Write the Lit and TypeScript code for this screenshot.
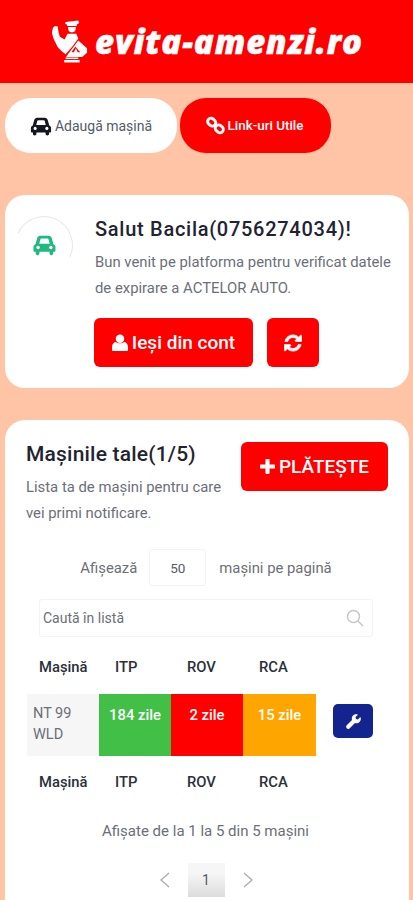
import { LitElement, html, css, svg } from "lit";
import { customElement } from "lit/decorators.js";

const carPath = "M3 15.5 L4.6 9.6 C5 8 6.2 7 8 7 H16 C17.8 7 19 8 19.4 9.6 L21 15.5 C22.3 16 23 17 23 18.2 V22 C23 22.6 22.6 23 22 23 H20.8 V24.5 C20.8 25.6 20 26.4 18.9 26.4 C17.8 26.4 17 25.6 17 24.5 V23 H7 V24.5 C7 25.6 6.2 26.4 5.1 26.4 C4 26.4 3.2 25.6 3.2 24.5 V23 H2 C1.4 23 1 22.6 1 22 V18.2 C1 17 1.7 16 3 15.5 Z M6.8 15 H17.2 L16.2 10.8 C16 10 15.6 9.6 14.8 9.6 H9.2 C8.4 9.6 8 10 7.8 10.8 Z";
const Car = (cls: string) => html`<svg class=${cls} viewBox="0 4 24 24" aria-hidden="true"><path fill-rule="evenodd" d=${carPath}></path><circle cx="5.6" cy="18.6" r="1.7" fill="var(--hole)"></circle><circle cx="18.4" cy="18.6" r="1.7" fill="var(--hole)"></circle></svg>`;

@customElement("app-root")
export class AppRoot extends LitElement {
  static styles = css`
    :host { display: block; height: 900px; overflow: hidden; background: #ffc4a6; font-family: Roboto, sans-serif; color: #6b7280; }
    * { box-sizing: border-box; }
    .top { height: 83px; background: #ff0000; display: flex; align-items: center; justify-content: center; gap: 6px; padding-bottom: 1px; }
    .logo-ic { width: 39px; height: 49px; fill: #fff; flex: none; }
    .brand { font-family: "Open Sans", sans-serif; font-weight: 800; font-style: italic; font-size: 33px; line-height: 1; color: #fff; letter-spacing: 0.85px; -webkit-text-stroke: 0.5px #fff; margin-top: 1px; }
    .tabs { display: flex; gap: 3px; padding: 15px 5px 0; }
    .tab { height: 55px; border-radius: 26px; display: flex; align-items: center; justify-content: center; gap: 3px; font-size: 14px; }
    .tab-light { width: 172px; background: #fff; color: #555b66; --hole: #fff; }
    .tab-red { width: 151px; background: #f00; color: #fff; font-weight: 500; font-size: 13.4px; padding-right: 2px; }
    .tab-car { width: 22px; height: 22px; fill: #14171f; }
    .tab-link { width: 19px; height: 19px; stroke: #fff; fill: none; stroke-width: 3; }
    .card { background: #fff; border-radius: 20px; margin: 0 4px 0 5px; }
    .hello { margin-top: 42px; height: 193px; padding: 23px 21px 0 10px; display: flex; gap: 22px; }
    .avatar { width: 58px; height: 58px; border-radius: 50%; flex: none; margin-top: -2px; border: 1px solid transparent; border-top-color: #e7e7e7; border-right-color: #e7e7e7; display: flex; align-items: center; justify-content: center; transform: rotate(-20deg); }
    .avatar svg { width: 25px; height: 24px; fill: #22b981; --hole: #fff; transform: rotate(20deg); }
    .hello h2 { margin: 0; font-size: 20px; line-height: 22px; font-weight: 500; color: #1f2430; letter-spacing: 0.72px; white-space: nowrap; }
    .hello p { margin: 9px 0 0; font-size: 14.85px; line-height: 26px; color: #6b6f78; white-space: nowrap; }
    .actions { display: flex; gap: 14px; margin: 17px 0 0 -1px; }
    .btn { height: 49px; background: #f00; color: #fff; border-radius: 6px; display: flex; align-items: center; justify-content: center; font-weight: 500; }
    .btn-out { width: 159px; font-size: 19px; gap: 4px; }
    .btn-out svg { width: 16px; height: 17px; fill: #fff; }
    .btn-sync { width: 52px; }
    .btn-sync svg { width: 18px; height: 18px; fill: #fff; stroke: #fff; stroke-width: 0.8; }
    .cars { margin-top: 32px; height: 520px; padding: 22px 21px 0 22px; }
    .cars-head { display: flex; justify-content: space-between; align-items: flex-start; margin-left: -1px; }
    .cars-head h2 { margin: 0; font-size: 21px; line-height: 24px; font-weight: 500; color: #1f2430; letter-spacing: 0.2px; white-space: nowrap; }
    .cars-head p { margin: 8px 0 0; font-size: 14.85px; line-height: 26px; color: #6b6f78; width: 206px; }
    .pay { width: 147px; font-size: 19px; gap: 4px; flex: none; }
    .pay svg { width: 15px; height: 15px; fill: #fff; }
    .len { display: flex; align-items: center; justify-content: center; margin-top: 23px; font-size: 14.85px; color: #6b6f78; padding-right: 3px; }
    .len-box { width: 57px; height: 37px; margin: 0 13px 0 12px; border: 1px solid #f3f3f3; border-radius: 3px; display: flex; align-items: center; justify-content: center; color: #555b66; font-size: 13.5px; }
    .search { margin: 13px 15px 0 12px; height: 38px; border: 1px solid #f3f3f3; border-radius: 3px; display: flex; align-items: center; justify-content: space-between; padding: 0 8px 0 3px; font-size: 14px; color: #6b6f78; }
    .search svg { width: 18px; height: 18px; stroke: #c4c6ca; fill: none; stroke-width: 1.5; }
    .thead, .row { display: grid; grid-template-columns: 72px 72px 72px 73px 1fr; }
    .thead { height: 54px; align-items: center; font-size: 14.8px; font-weight: 500; color: #2b303b; margin-top: 3px; }
    .thead span:first-child { padding-left: 12px; }
    .thead span:not(:first-child) { padding-left: 16px; }
    .row { height: 62px; }
    .plate { background: #f6f6f6; padding: 9px 6px 0 6px; font-size: 14.5px; line-height: 21px; color: #6b6f78; }
    .day { color: #fff; font-size: 14.8px; font-weight: 500; text-align: center; padding-top: 11px; line-height: 20px; }
    .green { background: #41bf46; }
    .red { background: #f00; }
    .orange { background: #ffa500; }
    .tool { width: 40px; height: 34px; margin: 10px 0 0 17px; background: #14248f; border-radius: 5px; display: flex; align-items: center; justify-content: center; }
    .tool svg { width: 15px; height: 15px; fill: #fff; }
    .thead.foot { height: 56px; margin-top: 0; padding-bottom: 4px; }
    .info { text-align: center; font-size: 15px; color: #6b6f78; margin-top: 9px; line-height: 20px; padding-right: 4px; }
    .pager { display: flex; justify-content: center; align-items: center; gap: 16px; margin-top: 22px; padding-right: 3px; }
    .pager svg { width: 14px; height: 18px; stroke: #a9abb0; fill: none; stroke-width: 1.3; }
    .page { width: 37px; height: 34px; background: linear-gradient(#f6f6f6 30%, #dcdcdc); display: flex; align-items: center; justify-content: center; font-size: 14px; color: #555b66; }
  `;

  render() {
    return html`
      <header class="top">
        <svg class="logo-ic" viewBox="0 0 40 50" aria-hidden="true">
          ${svg`<path d="M16 5 L29 3.5 L30 6 L27.5 7.5 V9 H17.5 V7.5 L15.5 7 Z"></path>
          <path d="M18.5 10 H26.5 C26.5 14 25 15.5 22.5 15.5 C20 15.5 18.5 14 18.5 10 Z"></path>
          <path d="M3 11 L5 9 L8 9.5 L8.5 14 L10 20 L15 23 L18 17 L27 17 L29 22 L23 30 L16 38 L12 35 L8 31 L3.5 22 L2 16 Z"></path>
          <path d="M29 24 L38 32 L38 36.5 L33 41 H16.5 L18 38.5 Z M26 30 L22 36 H24.5 L26.5 32 L28.5 36 H31 Z" fill-rule="evenodd"></path>
          <rect x="14.5" y="44" width="16" height="2.5"></rect>
          <rect x="16" y="41.5" width="13" height="1.5"></rect>`}
        </svg>
        <span class="brand">evita-amenzi.ro</span>
      </header>

      <nav class="tabs">
        <div class="tab tab-light">${Car("tab-car")}<span>Adaugă mașină</span></div>
        <div class="tab tab-red">
          <svg class="tab-link" viewBox="0 0 20 20" aria-hidden="true"><rect x="1.5" y="3" width="9" height="7" rx="3.4" transform="rotate(40 6 6.5)"></rect><rect x="9.5" y="10" width="9" height="7" rx="3.4" transform="rotate(40 14 13.5)"></rect></svg>
          <span>Link-uri Utile</span>
        </div>
      </nav>

      <section class="card hello">
        <div class="avatar">${Car("")}</div>
        <div>
          <h2>Salut Bacila(0756274034)!</h2>
          <p>Bun venit pe platforma pentru verificat datele<br />de expirare a ACTELOR AUTO.</p>
          <div class="actions">
            <div class="btn btn-out">
              <svg viewBox="0 0 17 18" aria-hidden="true"><circle cx="8.5" cy="5" r="4.5"></circle><path d="M1 18 C0.3 18 0 17.6 0 17 V14 C0 11 1.5 9 4 8.5 C6.4 10.4 10.6 10.4 13 8.5 C15.5 9 17 11 17 14 V17 C17 17.6 16.7 18 16 18 Z"></path></svg>
              <span>Ieși din cont</span>
            </div>
            <div class="btn btn-sync">
              <svg viewBox="0 0 20 20" aria-hidden="true"><path d="M1 8.2 C2 3.8 5.6 1 10 1 C12.5 1 14.6 2 16.2 3.5 L18.3 1.4 C18.8 0.9 19.6 1.2 19.6 2 V8.2 H13.2 C12.5 8.2 12.1 7.3 12.7 6.8 L14.2 5.4 C13 4.4 11.6 3.9 10 3.9 C7.2 3.9 5 5.6 4.2 8.2 Z"></path><path d="M19 11.8 C18 16.2 14.4 19 10 19 C7.5 19 5.4 18 3.8 16.5 L1.7 18.6 C1.2 19.1 0.4 18.8 0.4 18 V11.8 H6.8 C7.5 11.8 7.9 12.7 7.3 13.2 L5.8 14.6 C7 15.6 8.4 16.1 10 16.1 C12.8 16.1 15 14.4 15.8 11.8 Z"></path></svg>
            </div>
          </div>
        </div>
      </section>

      <section class="card cars">
        <div class="cars-head">
          <div>
            <h2>Mașinile tale(1/5)</h2>
            <p>Lista ta de mașini pentru care vei primi notificare.</p>
          </div>
          <div class="btn pay">
            <svg viewBox="0 0 16 16" aria-hidden="true"><path d="M5.8 1 C5.8 0.5 6.2 0 6.8 0 H9.2 C9.8 0 10.2 0.5 10.2 1 V5.8 H15 C15.5 5.8 16 6.2 16 6.8 V9.2 C16 9.8 15.5 10.2 15 10.2 H10.2 V15 C10.2 15.5 9.8 16 9.2 16 H6.8 C6.2 16 5.8 15.5 5.8 15 V10.2 H1 C0.5 10.2 0 9.8 0 9.2 V6.8 C0 6.2 0.5 5.8 1 5.8 H5.8 Z"></path></svg>
            <span>PLĂTEȘTE</span>
          </div>
        </div>

        <div class="len"><span>Afișează</span><div class="len-box">50</div><span>mașini pe pagină</span></div>

        <div class="search">
          <span>Caută în listă</span>
          <svg viewBox="0 0 18 18" aria-hidden="true"><circle cx="7.5" cy="7.5" r="6"></circle><path d="M12 12 L17 17"></path></svg>
        </div>

        <div class="thead"><span>Mașină</span><span>ITP</span><span>ROV</span><span>RCA</span><span></span></div>
        <div class="row">
          <div class="plate">NT 99 WLD</div>
          <div class="day green">184 zile</div>
          <div class="day red">2 zile</div>
          <div class="day orange">15 zile</div>
          <div>
            <div class="tool"><svg viewBox="0 0 16 16" aria-hidden="true"><path d="M15.6 3.7 C15.5 3.4 15.2 3.3 15 3.5 L12.7 5.8 L10.6 5.4 L10.2 3.3 L12.5 1 C12.7 0.8 12.6 0.5 12.3 0.4 C10.6 -0.1 8.7 0.3 7.5 1.6 C6.2 2.9 5.9 4.8 6.4 6.4 L0.8 12 C-0.1 12.9 -0.1 14.3 0.8 15.2 C1.7 16.1 3.1 16.1 4 15.2 L9.6 9.6 C11.2 10.2 13.1 9.8 14.4 8.5 C15.7 7.3 16.1 5.4 15.6 3.7 Z"></path></svg></div>
          </div>
        </div>
        <div class="thead foot"><span>Mașină</span><span>ITP</span><span>ROV</span><span>RCA</span><span></span></div>

        <div class="info">Afișate de la 1 la 5 din 5 mașini</div>

        <div class="pager">
          <svg viewBox="0 0 14 18" aria-hidden="true"><path d="M11 2 L3 9 L11 16"></path></svg>
          <div class="page">1</div>
          <svg viewBox="0 0 14 18" aria-hidden="true"><path d="M3 2 L11 9 L3 16"></path></svg>
        </div>
      </section>
    `;
  }
}
